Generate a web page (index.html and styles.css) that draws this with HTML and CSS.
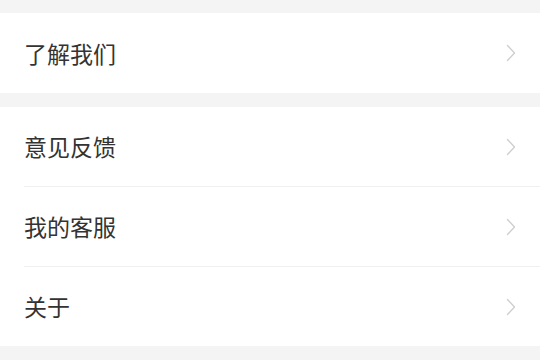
FILE: index.html
```html
<!DOCTYPE html>
<html lang="zh-CN">
<head>
<meta charset="utf-8">
<link rel="stylesheet" href="styles.css">
</head>
<body>
<div class="page">
  <div class="group">
    <div class="row tall">
      <span class="label">了解我们</span>
      <svg class="chev" width="10" height="18" viewBox="0 0 10 18"><path d="M1.5 1.5 L8.5 9 L1.5 16.5" fill="none" stroke="#cfcfcf" stroke-width="1.4" stroke-linecap="round" stroke-linejoin="round"/></svg>
    </div>
  </div>
  <div class="group">
    <div class="row">
      <span class="label">意见反馈</span>
      <svg class="chev" width="10" height="18" viewBox="0 0 10 18"><path d="M1.5 1.5 L8.5 9 L1.5 16.5" fill="none" stroke="#cfcfcf" stroke-width="1.4" stroke-linecap="round" stroke-linejoin="round"/></svg>
    </div>
    <div class="row">
      <span class="label">我的客服</span>
      <svg class="chev" width="10" height="18" viewBox="0 0 10 18"><path d="M1.5 1.5 L8.5 9 L1.5 16.5" fill="none" stroke="#cfcfcf" stroke-width="1.4" stroke-linecap="round" stroke-linejoin="round"/></svg>
    </div>
    <div class="row">
      <span class="label">关于</span>
      <svg class="chev" width="10" height="18" viewBox="0 0 10 18"><path d="M1.5 1.5 L8.5 9 L1.5 16.5" fill="none" stroke="#cfcfcf" stroke-width="1.4" stroke-linecap="round" stroke-linejoin="round"/></svg>
    </div>
  </div>
</div>
</body>
</html>
```
FILE: styles.css
```css
html, body {
  margin: 0;
  padding: 0;
  background: #f4f4f4;
  height: 100%;
}
.page {
  padding-top: 13px;
  display: flex;
  flex-direction: column;
  gap: 14px;
  font-family: "Noto Sans CJK SC", "Noto Sans", sans-serif;
}
.group {
  background: #ffffff;
  padding-left: 24px;
}
.row {
  height: 79px;
  display: flex;
  align-items: center;
  justify-content: space-between;
  padding-right: 24px;
}
.row.tall {
  height: 80px;
}
.row + .row {
  border-top: 1px solid #f0f0f0;
}
.label {
  font-size: 23px;
  color: #333333;
  line-height: 1;
  letter-spacing: 0;
}
.chev {
  display: block;
}
```
